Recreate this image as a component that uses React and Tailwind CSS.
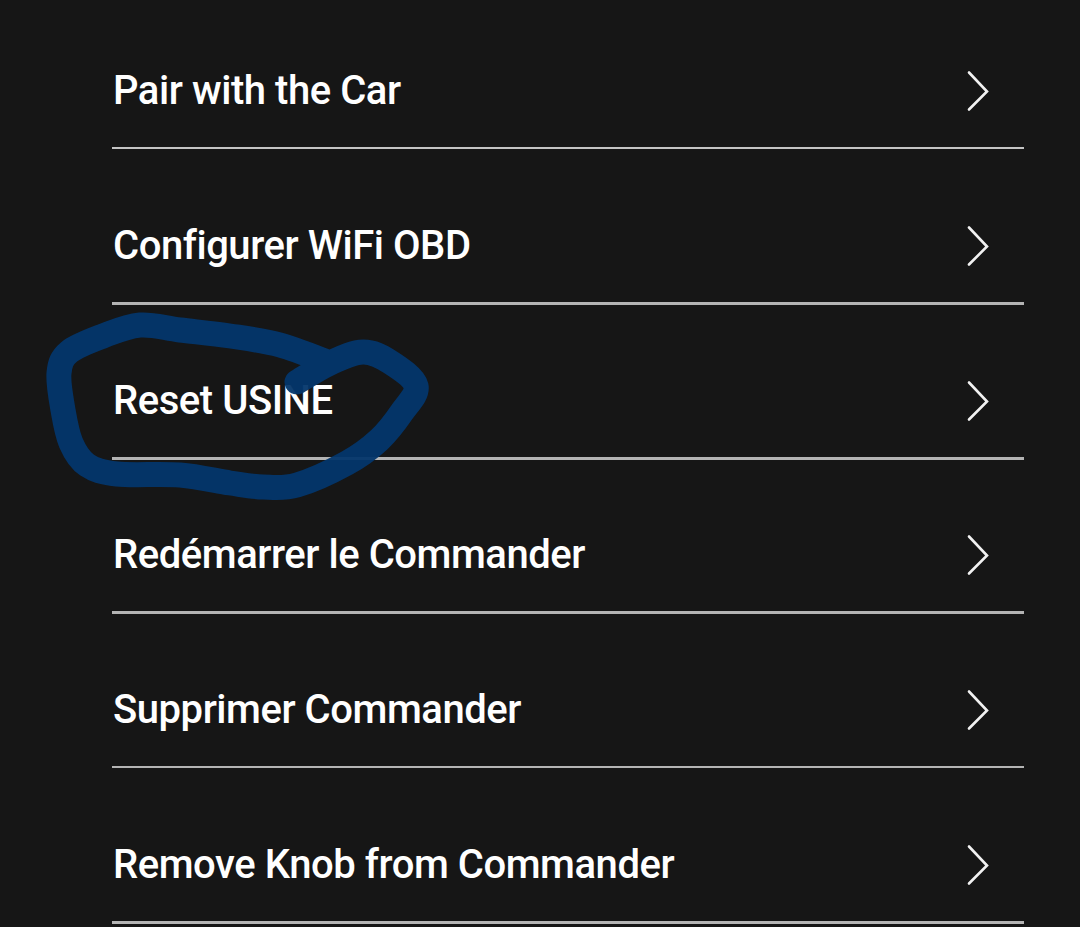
const rows = [
  { label: 'Pair with the Car', line: 'h-[2px] bg-[#c4c4c4]' },
  { label: 'Configurer WiFi OBD', line: 'h-[3px] bg-[#b4b4b4]' },
  { label: 'Reset USINE', line: 'h-[3px] bg-[#b4b4b4]' },
  { label: 'Redémarrer le Commander', line: 'h-[3px] bg-[#b4b4b4]' },
  { label: 'Supprimer Commander', line: 'h-[2px] bg-[#b4b4b4]' },
  { label: 'Remove Knob from Commander', line: 'h-[3px] bg-[#b4b4b4]' },
];

// centre line of the pen stroke, read off the reference
const scribble = [
  [297, 382], [330, 363], [363, 352], [390, 362], [416, 386], [402, 412], [379, 440], [347, 463],
  [297, 485], [263, 487], [230, 483], [180, 475], [117, 474], [87, 465], [71, 443], [63, 410],
  [59, 373], [69, 352], [103, 336], [140, 325], [180, 330], [230, 336], [280, 345], [330, 363],
];

const smoothPath = (pts) => {
  let d = `M${pts[0][0]} ${pts[0][1]}`;
  for (let i = 0; i < pts.length - 1; i++) {
    const p0 = pts[i - 1] || pts[i];
    const p1 = pts[i];
    const p2 = pts[i + 1];
    const p3 = pts[i + 2] || p2;
    const c1 = [p1[0] + (p2[0] - p0[0]) / 6, p1[1] + (p2[1] - p0[1]) / 6];
    const c2 = [p2[0] - (p3[0] - p1[0]) / 6, p2[1] - (p3[1] - p1[1]) / 6];
    d += ` C${c1[0]} ${c1[1]} ${c2[0]} ${c2[1]} ${p2[0]} ${p2[1]}`;
  }
  return d;
};

const Chevron = () => (
  <svg width="24" height="42" viewBox="0 0 24 42" fill="none" stroke="#f2f2f2" strokeWidth="2.6" strokeLinecap="round">
    <path d="M4 2.5 L22 21.5 L4 39.5" />
  </svg>
);

export default function App() {
  return (
    <div className="relative h-[927px] w-[1080px] overflow-hidden bg-[#161616] font-['Roboto',sans-serif]">
      <div className="pl-[112px] pr-[56px] pt-[13px]">
        {rows.map((row) => (
          <div key={row.label} className="h-[154.8px]">
            <div className="flex h-[134px] items-center justify-between pl-[1px] pr-[35px] pt-[22px]">
              <span className="text-[40px] font-medium leading-none tracking-[-0.45px] text-white">{row.label}</span>
              <Chevron />
            </div>
            <div className={row.line} />
          </div>
        ))}
      </div>
      {/* pen scribble over the screenshot */}
      <svg className="absolute left-0 top-0" width="1080" height="927" fill="none">
        <path
          d={smoothPath(scribble)}
          stroke="#03366b"
          strokeWidth="25"
          strokeLinecap="round"
          strokeLinejoin="round"
          opacity="0.95"
        />
      </svg>
    </div>
  );
}
